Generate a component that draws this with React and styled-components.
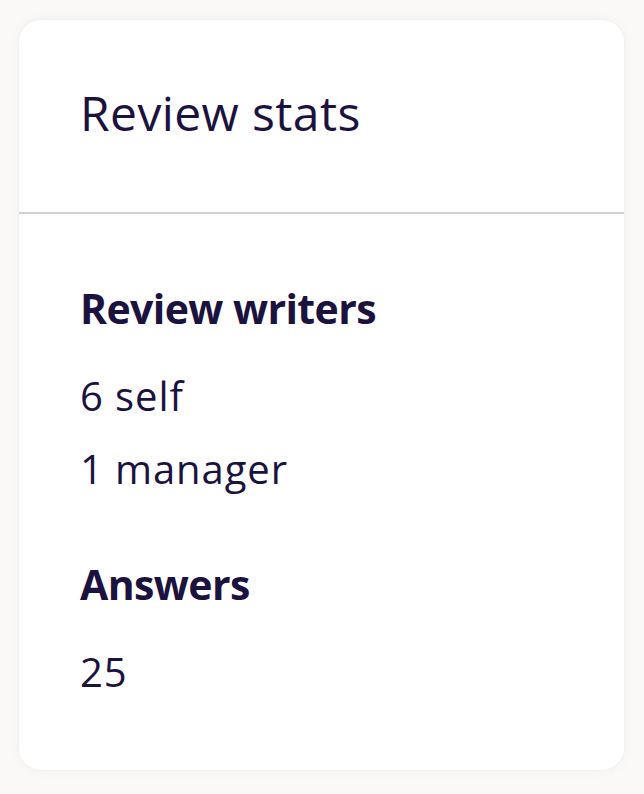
import React from "react"
import styled, { createGlobalStyle } from "styled-components"

const GlobalStyle = createGlobalStyle`
  body {
    margin: 0;
    background: #faf9f8;
    font-family: "Open Sans", "Lato", sans-serif;
    color: #1b1240;
  }
`

const Page = styled.div`
  padding: 20px 20px 24px 19px;
`

const Card = styled.section`
  background: #ffffff;
  border-radius: 22px;
  box-shadow: 0 0 0 1px #f3f1ef, 0 0 14px rgba(60, 40, 20, 0.04);
  height: 750px;
  box-sizing: border-box;
`

const Header = styled.header`
  padding: 61px 61px 0;
  height: 194px;
  box-sizing: border-box;
  border-bottom: 2px solid #d3d0dc;
`

const Title = styled.h2`
  margin: 0;
  font-size: 48px;
  font-weight: 400;
  line-height: 64px;
  letter-spacing: 0.4px;
`

const Body = styled.div`
  display: flex;
  flex-direction: column;
  gap: 61px;
  padding: 66px 61px 0;
`

const Section = styled.div`
  display: flex;
  flex-direction: column;
`

const Label = styled.h3`
  margin: 0 0 34px;
  font-size: 41px;
  font-weight: 700;
  line-height: 56px;
  letter-spacing: -0.6px;
`

const Values = styled.div`
  display: flex;
  flex-direction: column;
  gap: 21px;
`

const Value = styled.p`
  margin: 0;
  font-size: 40px;
  line-height: 52px;
  letter-spacing: 0.9px;
`

const stats = [
  { label: "Review writers", values: ["6 self", "1 manager"] },
  { label: "Answers", values: ["25"] },
]

export default function App() {
  return (
    <>
      <GlobalStyle />
      <Page>
        <Card>
          <Header>
            <Title>Review stats</Title>
          </Header>
          <Body>
            {stats.map((s) => (
              <Section key={s.label}>
                <Label>{s.label}</Label>
                <Values>
                  {s.values.map((v) => (
                    <Value key={v}>{v}</Value>
                  ))}
                </Values>
              </Section>
            ))}
          </Body>
        </Card>
      </Page>
    </>
  )
}
